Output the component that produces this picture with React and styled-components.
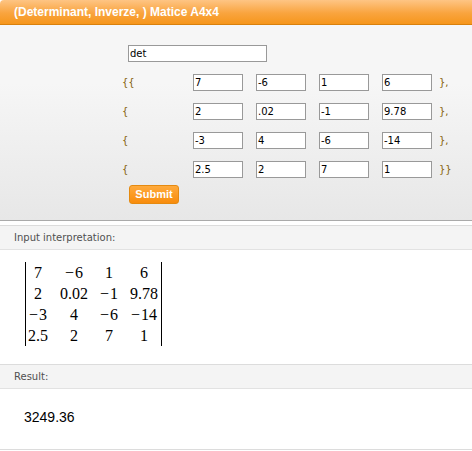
import React from 'react';
import styled, { createGlobalStyle } from 'styled-components';

const Global = createGlobalStyle`
  html, body { margin: 0; padding: 0; background: #fff; }
  body { font-family: "Liberation Sans", Arial, sans-serif; }
`;

const Header = styled.div`
  height: 24px;
  border-bottom: 1px solid #d9800c;
  border-top-left-radius: 4px;
  background: linear-gradient(#fec584, #f9a43e 55%, #f6961c);
  color: #fff;
  font: bold 12px/24px "Liberation Sans", Arial, sans-serif;
  padding-left: 14px;
`;

const Form = styled.div`
  padding: 20px 0 16px 122px;
  border-bottom: 1px solid #aaa;
  background: linear-gradient(#f6f6f6 30%, #e7e7e7);
`;

const Grid = styled.div`
  display: grid;
  grid-template-columns: 71px 63px 63px 63px 57px auto;
  grid-auto-rows: 17px;
  row-gap: 12px;
  align-items: center;
`;

const Field = styled.input`
  box-sizing: border-box;
  width: ${p => (p.$wide ? '139px' : '50px')};
  height: 17px;
  margin-left: ${p => (p.$wide ? '6px' : '0')};
  grid-column: ${p => (p.$wide ? '1 / 5' : 'auto')};
  border: 1px solid #999;
  padding: 0 1px;
  background: #fff;
  color: #000;
  font: 10px/15px "DejaVu Sans", Verdana, sans-serif;
  outline: none;
`;

const Brace = styled.span`
  grid-column: ${p => (p.$open ? '1' : 'auto')};
  color: #85620a;
  font: 10px/17px "DejaVu Sans", Verdana, sans-serif;
`;

const SubmitButton = styled.button`
  display: block;
  box-sizing: border-box;
  width: 50px;
  height: 19px;
  margin: 7px 0 0 7px;
  padding: 0;
  border: 1px solid #e58a10;
  border-radius: 3px;
  background: linear-gradient(#ffaa3c, #f88c0c);
  color: #fff;
  font: bold 11px/17px "Liberation Sans", Arial, sans-serif;
  cursor: pointer;
`;

const Section = styled.section`
  border-top: 1px solid #dcdcdc;
  border-bottom: ${p => (p.$last ? '1px solid #dcdcdc' : 'none')};
  margin-top: ${p => (p.$first ? '4px' : '0')};
`;

const SectionTitle = styled.div`
  height: 23px;
  background: #f4f4f4;
  border-bottom: 1px solid #e2e2e2;
  padding-left: 14px;
  color: #505050;
  font: 10px/23px "DejaVu Sans", Verdana, sans-serif;
`;

const MatrixPane = styled.div`
  height: 114px;
  box-sizing: border-box;
  padding: 12px 0 0 25px;
`;

const Matrix = styled.div`
  display: inline-grid;
  grid-template-columns: repeat(4, auto);
  grid-auto-rows: 21px;
  column-gap: 12px;
  justify-items: center;
  align-items: center;
  padding: 0 3px 0 2px;
  border-left: 1px solid #000;
  border-right: 1px solid #000;
  font: 16px/21px "Liberation Serif", "Times New Roman", serif;
  color: #000;
`;

const Minus = styled.span`
  margin-right: 1px;
`;

const ResultPane = styled.div`
  height: 60px;
  box-sizing: border-box;
  padding: 18px 24px 0;
  font: 14px/20px "Liberation Sans", Arial, sans-serif;
  color: #000;
`;

const rows = [
  ['7', '-6', '1', '6'],
  ['2', '.02', '-1', '9.78'],
  ['-3', '4', '-6', '-14'],
  ['2.5', '2', '7', '1'],
];

const matrix = [
  ['7', '-6', '1', '6'],
  ['2', '0.02', '-1', '9.78'],
  ['-3', '4', '-6', '-14'],
  ['2.5', '2', '7', '1'],
];

const opens = ['{{', '{', '{', '{'];
const closes = ['},', '},', '},', '}}'];

function Entry({ value }) {
  if (value.startsWith('-')) {
    return (
      <span>
        <Minus>−</Minus>
        {value.slice(1)}
      </span>
    );
  }
  return <span>{value}</span>;
}

export default function App() {
  return (
    <>
      <Global />
      <Header>(Determinant, Inverze, ) Matice A4x4</Header>
      <Form>
        <Grid>
          <Field $wide defaultValue="det" />
          {rows.map((r, i) => (
            <React.Fragment key={i}>
              <Brace $open>{opens[i]}</Brace>
              {r.map((v, j) => (
                <Field key={j} defaultValue={v} />
              ))}
              <Brace>{closes[i]}</Brace>
            </React.Fragment>
          ))}
        </Grid>
        <SubmitButton>Submit</SubmitButton>
      </Form>
      <Section $first>
        <SectionTitle>Input interpretation:</SectionTitle>
        <MatrixPane>
          <Matrix>
            {matrix.flat().map((v, k) => (
              <Entry key={k} value={v} />
            ))}
          </Matrix>
        </MatrixPane>
      </Section>
      <Section $last>
        <SectionTitle>Result:</SectionTitle>
        <ResultPane>3249.36</ResultPane>
      </Section>
    </>
  );
}
